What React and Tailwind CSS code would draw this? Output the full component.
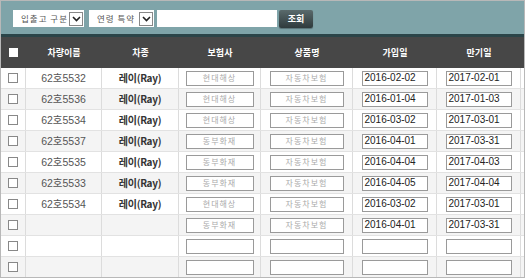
const rows = [
  { name: '62호5532', kind: '레이(Ray)', ins: '현대해상', prod: '자동차보험', start: '2016-02-02', end: '2017-02-01' },
  { name: '62호5536', kind: '레이(Ray)', ins: '현대해상', prod: '자동차보험', start: '2016-01-04', end: '2017-01-03' },
  { name: '62호5534', kind: '레이(Ray)', ins: '현대해상', prod: '자동차보험', start: '2016-03-02', end: '2017-03-01' },
  { name: '62호5537', kind: '레이(Ray)', ins: '동부화재', prod: '자동차보험', start: '2016-04-01', end: '2017-03-31' },
  { name: '62호5535', kind: '레이(Ray)', ins: '동부화재', prod: '자동차보험', start: '2016-04-04', end: '2017-04-03' },
  { name: '62호5533', kind: '레이(Ray)', ins: '동부화재', prod: '자동차보험', start: '2016-04-05', end: '2017-04-04' },
  { name: '62호5534', kind: '레이(Ray)', ins: '현대해상', prod: '자동차보험', start: '2016-03-02', end: '2017-03-01' },
  { name: '', kind: '', ins: '동부화재', prod: '자동차보험', start: '2016-04-01', end: '2017-03-31' },
  { name: '', kind: '', ins: '', prod: '', start: '', end: '' },
  { name: '', kind: '', ins: '', prod: '', start: '', end: '' },
]

const cols = 'grid grid-cols-[25px_76px_77px_82px_92px_84px_84px_1fr]'
const kr = 'font-["Noto_Sans_CJK_KR",sans-serif]'

function Select({ label, width }) {
  return (
    <div className={`flex items-center justify-between h-[17px] bg-white pl-[8px] pr-[1px] ${width}`}>
      <span className={`whitespace-nowrap text-[8.5px] leading-none tracking-[1px] text-[#555] ${kr}`}>{label}</span>
      <span className="flex-shrink-0 flex items-center justify-center w-[14px] h-[14px] border border-[#888] bg-white">
        <svg width="9" height="6" viewBox="0 0 9 6">
          <path d="M1 1 L4.5 4.5 L8 1" stroke="#222" strokeWidth="1.6" fill="none" />
        </svg>
      </span>
    </div>
  )
}

function Box({ value, dim, width }) {
  return (
    <div
      className={[
        'h-[15px] border border-[#9a9a9a] bg-white flex items-center leading-none',
        width,
        dim ? `justify-center text-[8px] tracking-[1px] text-[#aaa] ${kr}` : 'pl-[2px] text-[10px] text-[#222] font-["Liberation_Sans",sans-serif]',
      ].join(' ')}
    >
      {value}
    </div>
  )
}

export default function App() {
  return (
    <div className="w-[525px] h-[278px] overflow-hidden border border-[#b8b8b8] bg-white select-none">

      {/* Filter bar */}
      <div className="h-[33px] bg-[#7fa4a9] flex items-center pl-[12px] pt-[2px]">
        <Select label="입출고 구분" width="w-[71px]" />
        <Select label="연령 특약" width="w-[65px] ml-[5px]" />
        <div className="w-[120px] h-[17px] bg-white ml-[3px]" />
        <button className={`ml-[2px] w-[34px] h-[18px] rounded-[2px] bg-gradient-to-b from-[#5a6a6c] to-[#2f3b3d] text-white text-[9px] leading-none font-bold shadow-[0_1px_1px_rgba(0,0,0,0.3)] ${kr}`}>
          조회
        </button>
      </div>
      <div className="h-[3px] bg-[#2b4549]" />

      {/* Header */}
      <div className={`${cols} h-[31px] bg-[#474747] text-white text-[9px] leading-none font-bold ${kr}`}>
        <div className="flex items-center justify-center">
          <span className="w-[9px] h-[9px] bg-white" />
        </div>
        {['차량이름', '차종', '보험사', '상품명', '가입일', '만기일'].map(h => (
          <div key={h} className="flex items-center justify-center">{h}</div>
        ))}
        <div />
      </div>

      {/* Rows */}
      {rows.map((r, i) => (
        <div
          key={i}
          className={`${cols} h-[21px] border-b border-[#e2e2e2] ${i % 2 ? 'bg-[#f4f4f4]' : 'bg-white'}`}
        >
          <div className="flex items-center justify-center border-r border-[#dcdcdc]">
            <span className="w-[10px] h-[10px] border border-[#888] bg-white" />
          </div>
          <div className="flex items-center justify-center border-r border-[#dcdcdc] text-[10.5px] leading-none text-[#555] font-['Liberation_Sans','Noto_Sans_CJK_KR',sans-serif]">
            {r.name}
          </div>
          <div className="flex items-center justify-center border-r border-[#dcdcdc] text-[10px] leading-none font-bold text-[#333] tracking-[-0.3px] font-['Noto_Sans_CJK_KR',sans-serif]">
            {r.kind}
          </div>
          <div className="flex items-center justify-center border-r border-[#dcdcdc]">
            <Box value={r.ins} dim width="w-[68px]" />
          </div>
          <div className="flex items-center justify-center border-r border-[#dcdcdc]">
            <Box value={r.prod} dim width="w-[74px]" />
          </div>
          <div className="flex items-center justify-center border-r border-[#dcdcdc]">
            <Box value={r.start} width="w-[66px]" />
          </div>
          <div className="flex items-center justify-center border-r border-[#dcdcdc]">
            <Box value={r.end} width="w-[66px]" />
          </div>
          <div />
        </div>
      ))}
    </div>
  )
}
